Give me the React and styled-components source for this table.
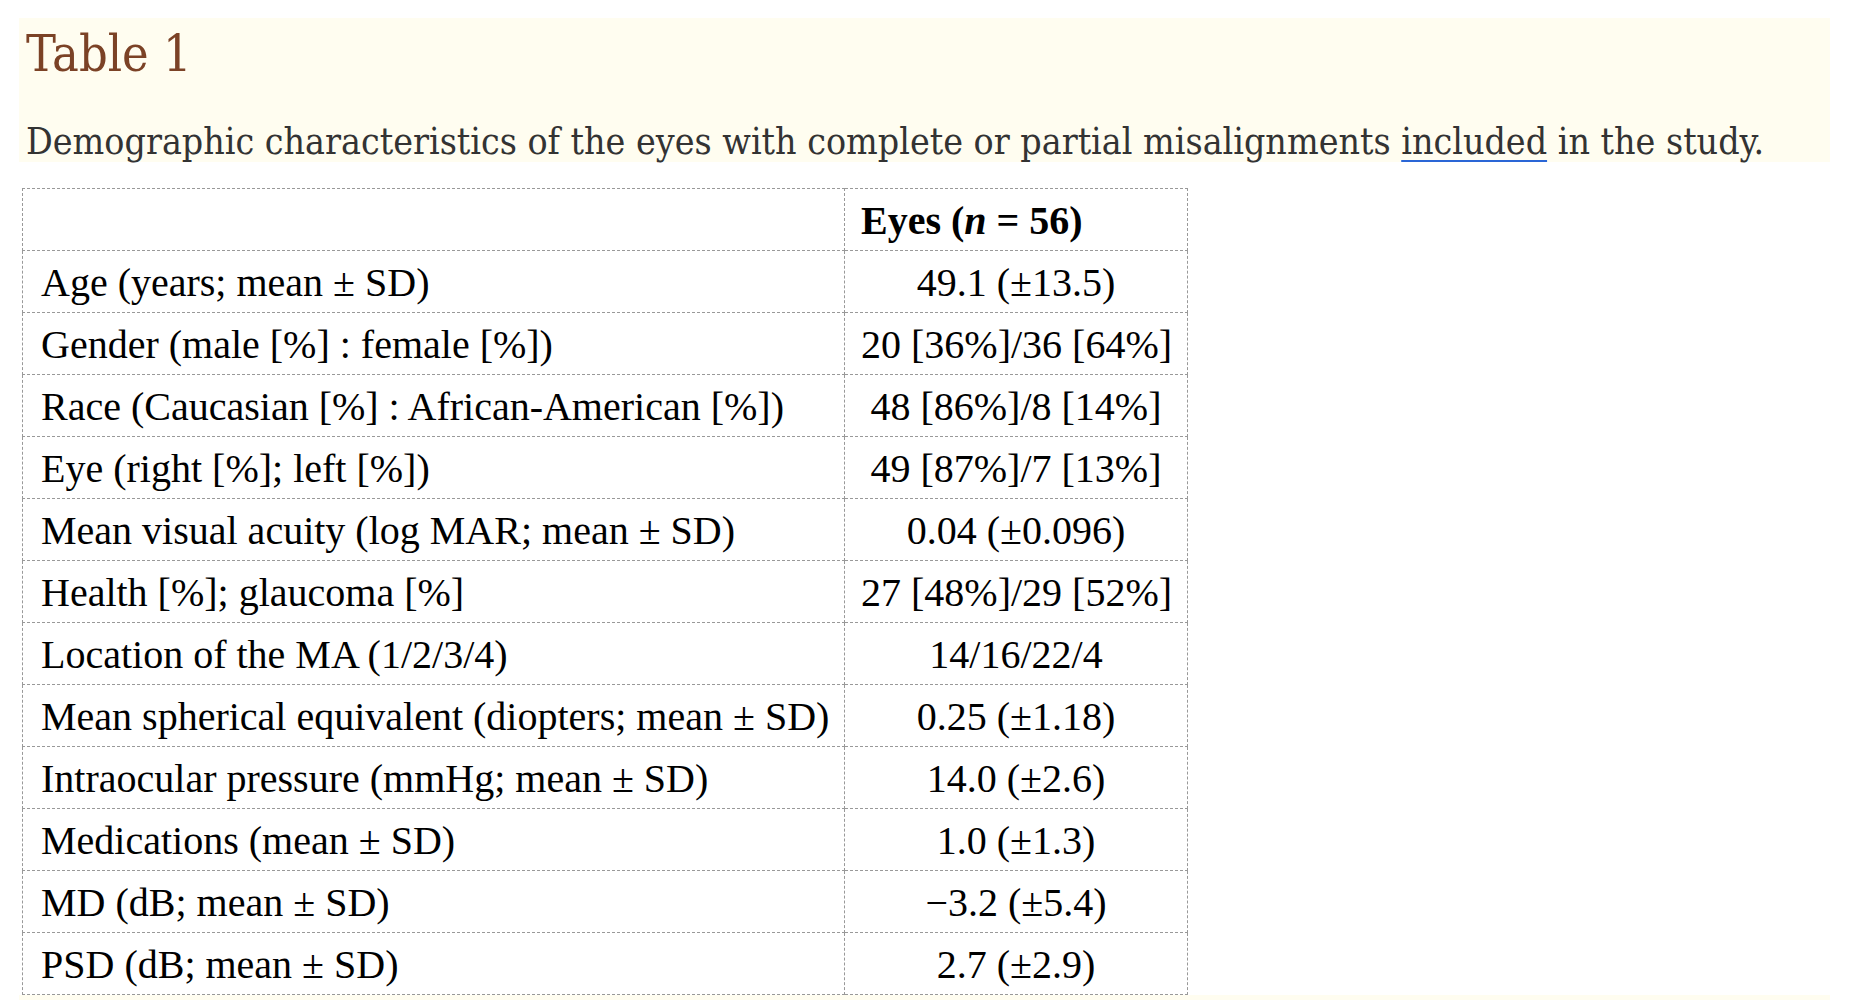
import React from 'react';
import styled, { createGlobalStyle } from 'styled-components';

const GlobalStyle = createGlobalStyle`
	body {
		margin: 0;
		background: #fff;
	}
`

const Page = styled.div`
	padding: 18px 0 0 19px;
	width: 1811px;
`

const CaptionBlock = styled.div`
	background: #fffdf0;
	height: 144px;
	padding: 5px 0 0 7px;
	box-sizing: border-box;
	font-family: "DejaVu Serif Condensed", "DejaVu Serif", serif;
`

const Title = styled.h2`
	margin: 0;
	font-weight: normal;
	font-size: 50px;
	line-height: 62px;
	color: #7b4226;
`

const Caption = styled.p`
	margin: 34px 0 0;
	font-size: 37.2px;
	line-height: 44px;
	color: #333;
`

const Marked = styled.span`
	text-decoration: underline;
	text-decoration-color: #2a66d6;
	text-decoration-thickness: 2px;
	text-underline-offset: 6px;
`

const Table = styled.table`
	margin: 26px 0 0 3px;
	border-collapse: collapse;
	table-layout: fixed;
	width: 1166px;
	font-family: "Liberation Serif", "Times New Roman", serif;
	font-size: 40px;
	line-height: 44px;
	color: #000;

	td, th {
		border: 1px dashed #999;
		padding: 10px 16px 7px;
		white-space: nowrap;
		vertical-align: top;
	}
`

const Head = styled.th`
	text-align: left;
	font-weight: bold;
`

const Label = styled.td`
	&& {
		padding-left: 18px;
	}
`

const Value = styled.td`
	text-align: center;
`

const Footnotes = styled.div`
	background: #fffdf0;
	height: 5px;
`

const rows = [
	['Age (years; mean ± SD)', '49.1 (±13.5)'],
	['Gender (male [%] : female [%])', '20 [36%]/36 [64%]'],
	['Race (Caucasian [%] : African-American [%])', '48 [86%]/8 [14%]'],
	['Eye (right [%]; left [%])', '49 [87%]/7 [13%]'],
	['Mean visual acuity (log MAR; mean ± SD)', '0.04 (±0.096)'],
	['Health [%]; glaucoma [%]', '27 [48%]/29 [52%]'],
	['Location of the MA (1/2/3/4)', '14/16/22/4'],
	['Mean spherical equivalent (diopters; mean ± SD)', '0.25 (±1.18)'],
	['Intraocular pressure (mmHg; mean ± SD)', '14.0 (±2.6)'],
	['Medications (mean ± SD)', '1.0 (±1.3)'],
	['MD (dB; mean ± SD)', '\u22123.2 (±5.4)'],
	['PSD (dB; mean ± SD)', '2.7 (±2.9)'],
]

const App = () => (
	<Page>
		<GlobalStyle />
		<CaptionBlock>
			<Title>Table 1</Title>
			<Caption>
				Demographic characteristics of the eyes with complete or partial misalignments <Marked>included</Marked> in the study.
			</Caption>
		</CaptionBlock>
		<Table>
			<colgroup>
				<col style={{ width: 822 }} />
				<col />
			</colgroup>
			<thead>
				<tr>
					<Head />
					<Head>Eyes (<i>n</i> = 56)</Head>
				</tr>
			</thead>
			<tbody>
				{rows.map(([label, value]) => (
					<tr key={label}>
						<Label>{label}</Label>
						<Value>{value}</Value>
					</tr>
				))}
			</tbody>
		</Table>
		<Footnotes />
	</Page>
)

export default App;
